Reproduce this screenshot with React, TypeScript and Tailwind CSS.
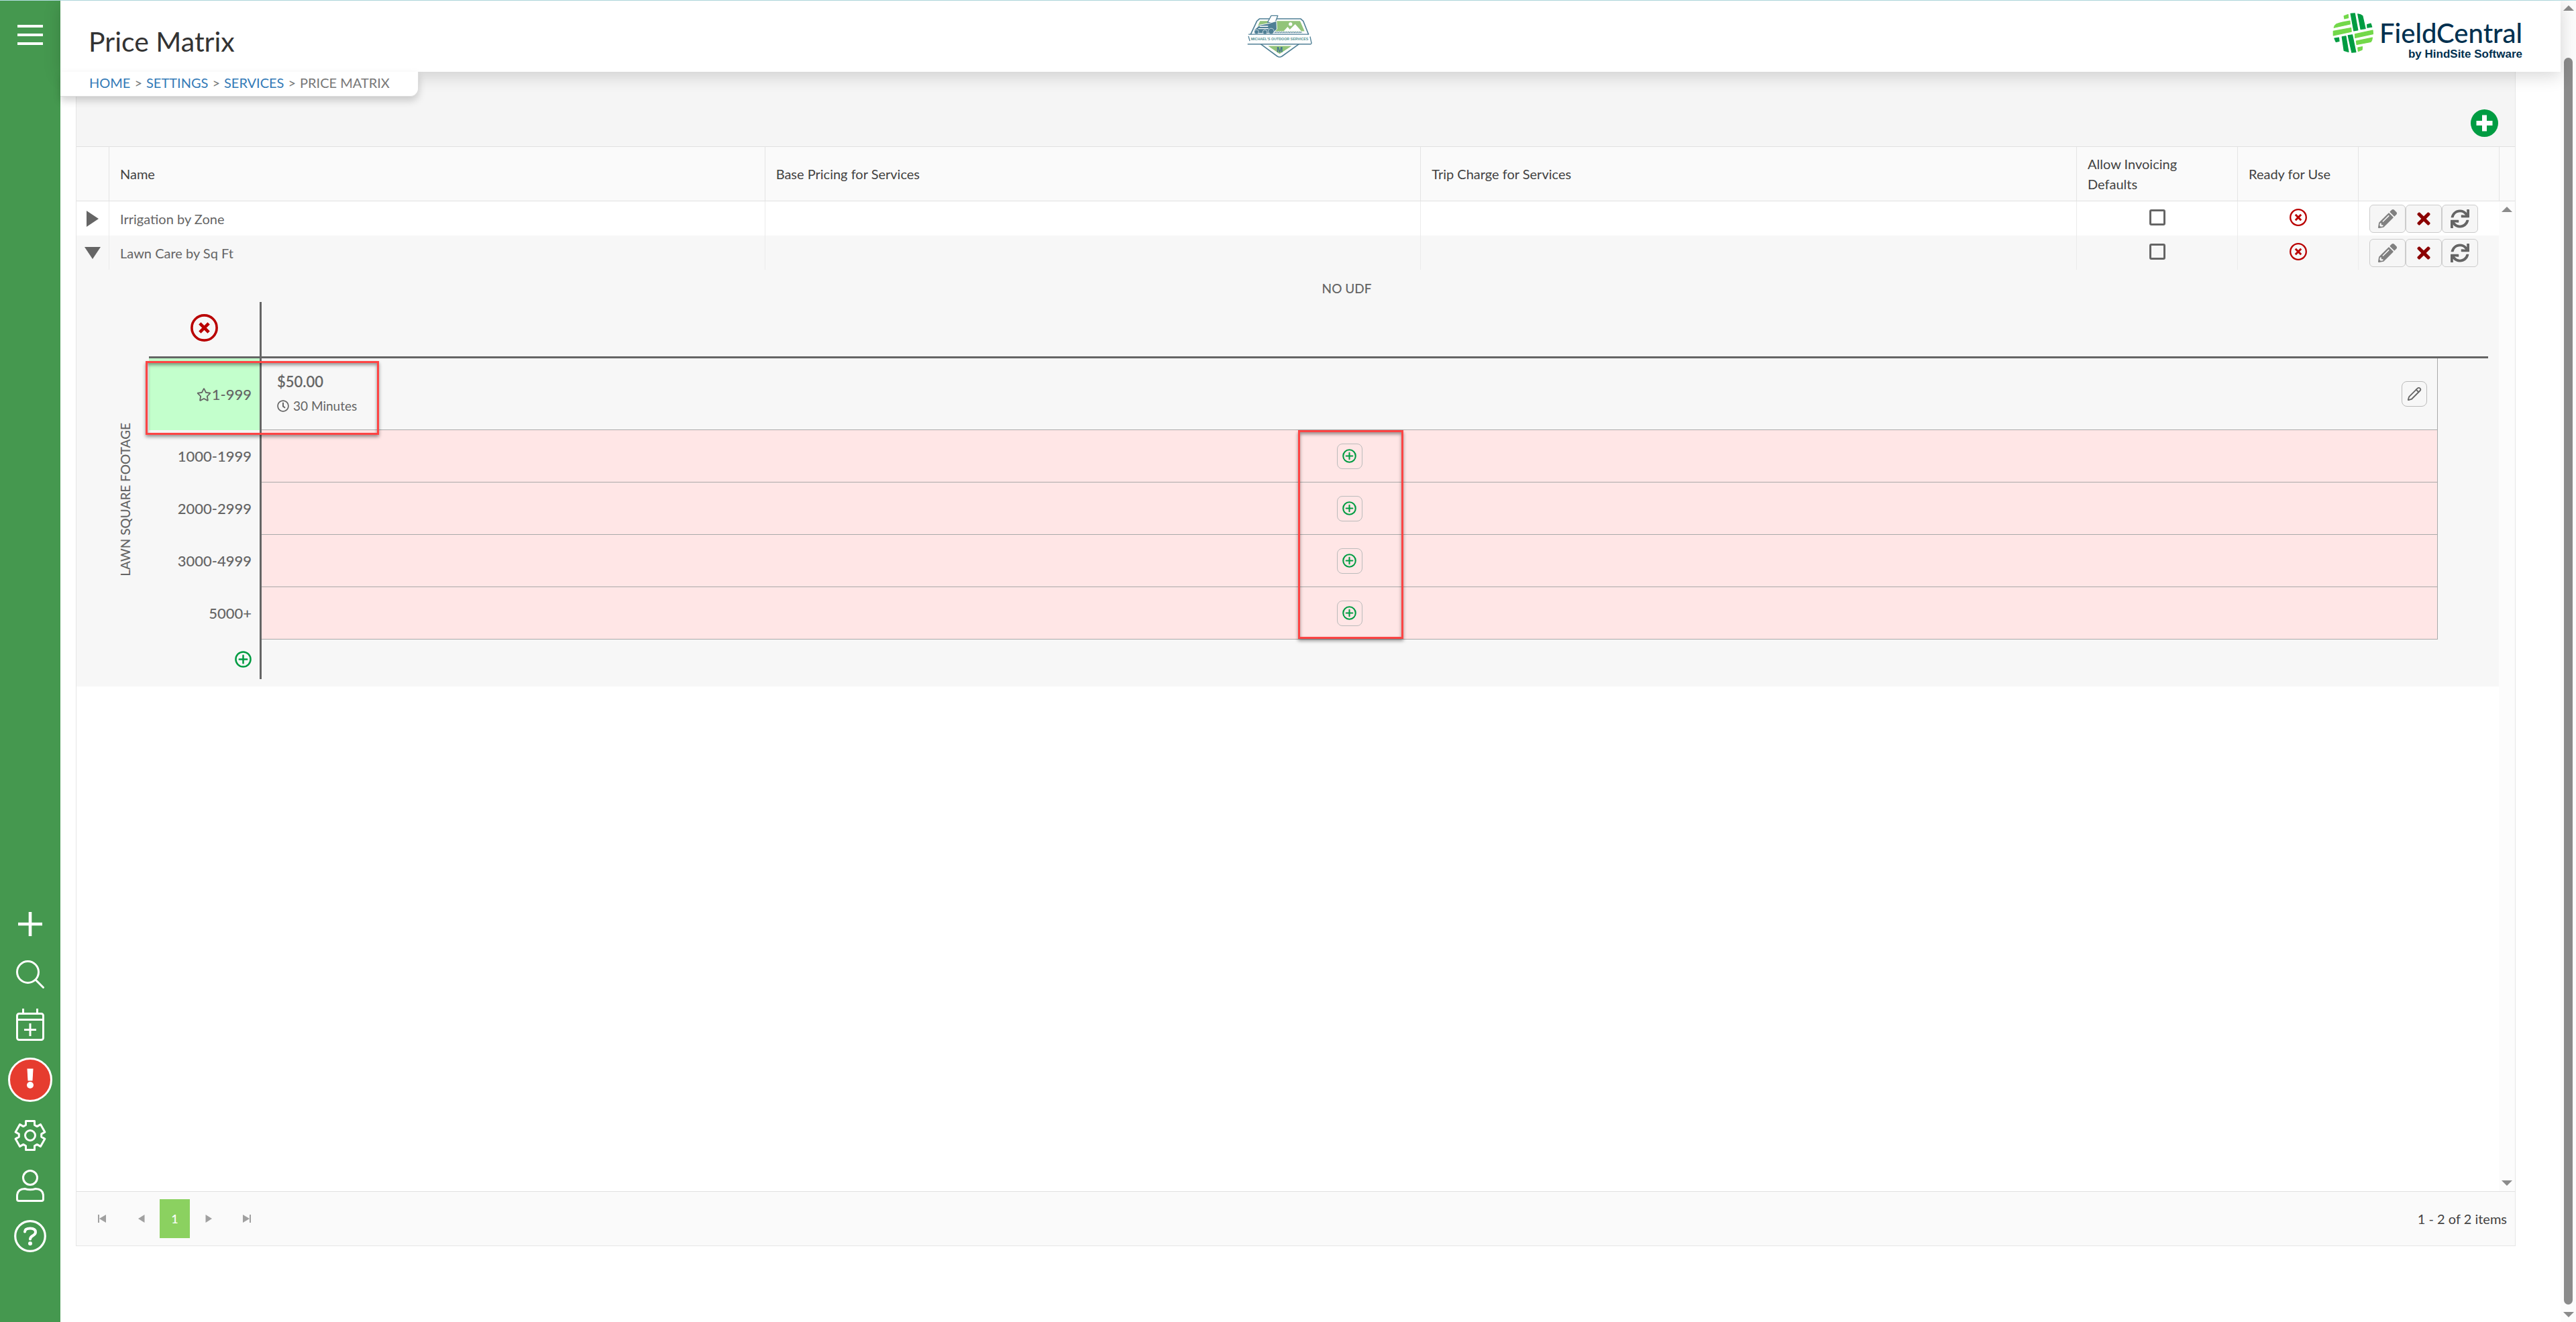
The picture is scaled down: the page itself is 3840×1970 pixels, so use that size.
import { useState, type ReactNode } from "react";
import { FaPencilAlt, FaRegClock, FaRegStar, FaSync, FaTimes } from "react-icons/fa";
import { Pencil } from "lucide-react";

const priceRows = [
  { id: 1, name: "Irrigation by Zone", expanded: false },
  { id: 2, name: "Lawn Care by Sq Ft", expanded: true },
];

const emptyRanges = ["1000-1999", "2000-2999", "3000-4999", "5000+"];

function CirclePlus({ className }: { className: string }) {
  return (
    <svg viewBox="0 0 24 24" className={className} fill="none" stroke="currentColor" strokeWidth="2.4">
      <circle cx="12" cy="12" r="10.6" />
      <path d="M12 6.5v11M6.5 12h11" strokeLinecap="round" />
    </svg>
  );
}

function CircleTimes({ className }: { className: string }) {
  return (
    <svg viewBox="0 0 26 26" className={className} fill="none" stroke="currentColor">
      <circle cx="13" cy="13" r="11.8" strokeWidth="2.3" />
      <path d="M8.8 8.8l8.4 8.4M17.2 8.8l-8.4 8.4" strokeWidth="3" />
    </svg>
  );
}

function CompanyLogo() {
  return (
    <svg viewBox="180 64 292 196" className="h-[65px] w-[97px]" role="img" aria-label="Michael's Outdoor Services">
      <path d="M236 82H420L432 92 456 152 410 198 336 251Q326 257 316 251L244 198 196 152 224 92Z" fill="#fff" stroke="#4f7f95" strokeWidth="5" strokeLinejoin="round" />
      <path d="M238 92H418L438 138H218Z" fill="#93c47a" />
      <path d="M274 204H380L326 240Z" fill="#93c47a" />
      <circle cx="375" cy="106" r="8" fill="#fff" />
      <path d="M344 138L362 118 372 130 396 106 424 138Z" fill="#fff" />
      <path d="M298 146l4-6 4 6 4-6 4 6 4-6 4 6 4-6 4 6 4-6 4 6 4-6 4 6 4-6 4 6 4-6 4 6 4-6 4 6 4-6 4 6 4-6 4 6 4-6 4 6 4-6 4 6 4-6 4 6 4-6 4 6 4-6 4 6" stroke="#4f7f95" strokeWidth="3" fill="none" />
      <path d="M288 68H318L304 104 272 98Z" fill="#fff" stroke="#4f7f95" strokeWidth="4" strokeLinejoin="round" />
      <path d="M212 132L236 110 280 102 312 92 314 128 296 148H212Z" fill="#4f7f95" stroke="#fff" strokeWidth="3" />
      <path d="M236 116h38M230 126h46" stroke="#fff" strokeWidth="4" />
      <circle cx="222" cy="141" r="10" fill="#4f7f95" stroke="#fff" strokeWidth="2" />
      <circle cx="260" cy="142" r="10" fill="#4f7f95" stroke="#fff" strokeWidth="2" />
      <circle cx="288" cy="138" r="13" fill="#4f7f95" stroke="#fff" strokeWidth="2" />
      <path d="M188 152H462L469 192Q468 196 464 196H184L188 180Z" fill="#fff" />
      <path d="M186 152H458M186 160L192 182M182 196H466Q470 194 469 190L463 162" fill="none" stroke="#4f7f95" strokeWidth="4" />
      <text x="326" y="179" textAnchor="middle" fontSize="16" className="fill-[#4f8f90] font-['Liberation_Sans',sans-serif] font-bold">
        MICHAEL'S OUTDOOR SERVICES
      </text>
      <text x="326" y="234" textAnchor="middle" fontSize="33" className="fill-[#3f6f8f] font-['Liberation_Sans',sans-serif] font-bold">
        M
      </text>
    </svg>
  );
}

function FieldCentralLogo() {
  return (
    <div className="flex text-[#00304f]">
      <svg viewBox="247 52 187 187" className="h-[62px] w-[62px]" strokeWidth="4" strokeLinejoin="round">
        <g fill="#73d84a" stroke="#73d84a">
          <path d="M299 70L317 63 318 78 301 82Z" />
          <path d="M265 106Q290 97 325 92L326 106 254 122Q256 112 265 106Z" />
          <path d="M251 138L330 123 332 140 251 157Z" />
          <path d="M348 151L428 134 429 150 349 168Z" />
          <path d="M354 182L426 167Q425 180 419 186L356 198Z" />
          <path d="M361 212L381 208 380 221 363 228Z" />
        </g>
        <g fill="#009c42" stroke="#009c42">
          <path d="M329 59L347 58 361 133 343 136Z" />
          <path d="M361 61Q374 62 382 69L395 126 374 129Z" />
          <path d="M403 108L419 104 424 119 404 122Z" />
          <path d="M256 170L275 167 277 183 263 186Z" />
          <path d="M290 163L307 160 319 231 299 225Z" />
          <path d="M317 157L336 154 352 232 334 233Z" />
        </g>
      </svg>
      <div className="ml-2 flex flex-col items-end pt-2">
        <span className="text-[40px] leading-[46px] font-medium">FieldCentral</span>
        <span className="font-['Liberation_Sans',sans-serif] text-[17px] leading-[18px] font-bold">by HindSite Software</span>
      </div>
    </div>
  );
}

function SideButton({ label, tall, children }: { label: string; tall?: boolean; children: ReactNode }) {
  return (
    <button type="button" aria-label={label} className={`flex w-full items-center justify-center text-white ${tall ? "h-[90px]" : "h-[75px]"}`}>
      {children}
    </button>
  );
}

function Sidebar() {
  return (
    <nav className="flex w-[90px] shrink-0 flex-col bg-[#45984f] pb-[91px]">
      <button type="button" aria-label="Menu" className="mt-9 flex flex-col gap-[9px] self-center">
        <span className="h-1 w-[38px] bg-white" />
        <span className="h-1 w-[38px] bg-white" />
        <span className="h-1 w-[38px] bg-white" />
      </button>
      <div className="mt-auto">
        <SideButton label="Add">
          <svg viewBox="0 0 36 36" className="size-9" stroke="currentColor" strokeWidth="4.6">
            <path d="M18 0v36M0 18h36" />
          </svg>
        </SideButton>
        <SideButton label="Search">
          <svg viewBox="0 0 42 42" className="size-[42px]" fill="none" stroke="currentColor" strokeWidth="3" strokeLinecap="round">
            <circle cx="17.5" cy="17.5" r="16" />
            <path d="M29 29l11.5 11.5" />
          </svg>
        </SideButton>
        <SideButton label="Schedule">
          <svg viewBox="0 0 42 48" className="h-12 w-[42px]" fill="none" stroke="currentColor" strokeWidth="3">
            <rect x="1.5" y="7.5" width="39" height="39" rx="3" />
            <path d="M1.5 16.5h39M10.5 0v7M31.5 0v7M21 22v19M12 31.5h18" />
          </svg>
        </SideButton>
        <SideButton label="Alerts" tall>
          <svg viewBox="0 0 66 66" className="size-[66px]">
            <circle cx="33" cy="33" r="31.5" fill="#e63c2f" stroke="#fff" strokeWidth="3" />
            <path d="M28.5 16.5h9l-1 18h-7z" fill="#fff" />
            <circle cx="33" cy="41" r="5" fill="#fff" />
          </svg>
        </SideButton>
        <SideButton label="Settings">
          <svg viewBox="-24 -24 48 48" className="size-12" fill="none" stroke="currentColor" strokeWidth="3" strokeLinejoin="round">
            <path d="M-6.5-21.5H6.5V-15.5L10.2-13.4 15.4-16.4 21.9-5.1 16.7-2.1V2.1L21.9 5.1 15.4 16.4 10.2 13.4 6.5 15.5V21.5H-6.5V15.5L-10.2 13.4-15.4 16.4-21.9 5.1-16.7 2.1V-2.1L-21.9-5.1-15.4-16.4-10.2-13.4-6.5-15.5Z" />
            <circle r="7.5" />
          </svg>
        </SideButton>
        <SideButton label="Account">
          <svg viewBox="0 0 42 48" className="h-12 w-[42px]" fill="none" stroke="currentColor" strokeWidth="3" strokeLinejoin="round">
            <circle cx="21" cy="12" r="10.5" />
            <path d="M1.5 44V39Q2 28.5 13 28.5Q21 31 29 28.5Q40 28.5 40.5 39V44Q40.5 46.5 38 46.5H4Q1.5 46.5 1.5 44Z" />
          </svg>
        </SideButton>
        <SideButton label="Help">
          <svg viewBox="0 0 48 48" className="size-12" fill="none" stroke="currentColor">
            <circle cx="24" cy="24" r="22.3" strokeWidth="3.2" />
            <path d="M16 17.5Q16 12.5 24 12.5Q32 12.5 32 18Q32 21 28.5 23Q24 25.5 24 28.5" strokeWidth="4" strokeLinecap="round" />
            <circle cx="24" cy="35" r="3" fill="currentColor" stroke="none" />
          </svg>
        </SideButton>
      </div>
    </nav>
  );
}

function ArrowUp() {
  return (
    <svg viewBox="0 0 16 8" className="h-2 w-4" fill="#8b8b8b">
      <path d="M8 0l8 8H0z" />
    </svg>
  );
}

function ArrowDown() {
  return (
    <svg viewBox="0 0 16 8" className="h-2 w-4" fill="#8b8b8b">
      <path d="M0 0h16L8 8z" />
    </svg>
  );
}

function PriceMatrixDetail() {
  return (
    <div className="flex pr-4 pb-[11px] text-[#656565]">
      <div className="flex w-[108px] shrink-0 items-center justify-end pt-[74px] pr-5">
        <span className="rotate-180 text-[19px] leading-[30px] font-medium [writing-mode:vertical-rl]">LAWN SQUARE FOOTAGE</span>
      </div>
      <div className="flex-1">
        <div className="flex h-12 items-center justify-center pt-2 pr-[84px] pl-[168px] text-[19px] font-medium">NO UDF</div>
        <div className="relative">
          <table className="w-full table-fixed border-separate border-spacing-0 text-[22px] font-medium">
            <colgroup>
              <col className="w-[168px]" />
              <col />
              <col className="w-[75px]" />
            </colgroup>
            <tbody>
              <tr className="h-[84px]">
                <td className="border-r-[3px] border-b-[3px] border-[#656565] p-0 pb-1">
                  <button type="button" aria-label="Remove" className="flex w-full justify-center text-[#b90000]">
                    <CircleTimes className="size-[41px]" />
                  </button>
                </td>
                <td className="border-b-[3px] border-[#656565]" />
                <td className="border-b-[3px] border-[#656565]" />
              </tr>
              <tr className="h-[107px]">
                <th scope="row" className="border-r-[3px] border-[#656565] bg-[#c3ffcc] p-0 pr-3 font-medium">
                  <span className="flex items-center justify-end gap-px">
                    <FaRegStar className="size-[22px]" />
                    1-999
                  </span>
                </th>
                <td className="border-r border-b border-[#a9a9a9] p-0 pr-[15px] pl-[23px]">
                  <div className="flex items-center justify-between">
                    <div>
                      <div className="leading-9 font-semibold">$50.00</div>
                      <div className="flex items-center gap-[6px] text-[19px] leading-9 font-normal">
                        <FaRegClock className="size-[18px]" />
                        30 Minutes
                      </div>
                    </div>
                    <button type="button" aria-label="Edit price" className="flex size-[38px] items-center justify-center rounded-lg border border-[#bbb]">
                      <Pencil className="size-[22px]" strokeWidth={2} />
                    </button>
                  </div>
                </td>
                <td />
              </tr>
              {emptyRanges.map((range) => (
                <tr key={range} className="h-[78px]">
                  <th scope="row" className="border-r-[3px] border-[#656565] p-0 pr-3 text-right font-medium">
                    {range}
                  </th>
                  <td className="border-r border-b border-[#a9a9a9] bg-[#ffe6e6] p-0">
                    <button type="button" aria-label={`Add price for ${range}`} className="mx-auto flex size-[38px] items-center justify-center rounded-lg border border-[#bbb] text-[#009c42]">
                      <CirclePlus className="size-[21px]" />
                    </button>
                  </td>
                  <td />
                </tr>
              ))}
              <tr className="h-[59px]">
                <td className="border-r-[3px] border-[#656565] p-0 pr-3">
                  <button type="button" aria-label="Add range" className="ml-auto block text-[#009c42]">
                    <CirclePlus className="size-[25px]" />
                  </button>
                </td>
                <td />
                <td />
              </tr>
            </tbody>
          </table>
          {/* Highlight boxes over the matrix */}
          <div className="pointer-events-none absolute top-[88px] -left-[5px] h-[110px] w-[348px] border-[3px] border-[#ff4444] shadow-[0_3px_5px_rgba(0,0,0,0.4),inset_0_3px_5px_rgba(0,0,0,0.4)]" />
          <div className="pointer-events-none absolute top-[191px] right-[73px] left-[168px] flex justify-center">
            <div className="h-[311px] w-[157px] border-[3px] border-[#ff4444] shadow-[0_3px_5px_rgba(0,0,0,0.4),inset_0_3px_5px_rgba(0,0,0,0.4)]" />
          </div>
        </div>
      </div>
    </div>
  );
}

function GridColumns({ withScroll }: { withScroll?: boolean }) {
  return (
    <colgroup>
      <col className="w-12" />
      <col />
      <col />
      <col />
      <col className="w-60" />
      <col className="w-[180px]" />
      <col className="w-[210px]" />
      {withScroll && <col className="w-6" />}
    </colgroup>
  );
}

function PriceGrid() {
  const [page, setPage] = useState(1);
  const th = "border-l border-[#e4e4e4] py-0 px-4 text-left font-normal";
  const td = "border-l border-[#ebebeb] py-0 px-4";
  const iconTd = "border-l border-[#ebebeb] px-4 pt-0 pb-1";
  const rowButton = "flex h-[42px] w-[54px] items-center justify-center rounded-md border border-[#ccc] bg-[#f6f6f6]";

  return (
    <section className="mr-[67px] mb-[113px] ml-[23px] flex flex-1 flex-col border border-t-0 border-[#e6e6e6] text-xl leading-[30px]">
      <div className="flex h-[111px] items-end justify-end bg-[#f5f5f5] pr-[25px] pb-[14px]">
        <button type="button" aria-label="Add price matrix">
          <svg viewBox="0 0 41 41" className="size-[41px]">
            <circle cx="20.5" cy="20.5" r="20.5" fill="#009c42" />
            <path d="M20.5 8.5v24M8.5 20.5h24" stroke="#fff" strokeWidth="7" />
          </svg>
        </button>
      </div>

      <table className="w-full table-fixed border-separate border-spacing-0 border-y border-[#e1e1e1] bg-[#fafafa] text-[#424242]">
        <GridColumns withScroll />
        <thead>
          <tr className="h-20">
            <th />
            <th className={th}>Name</th>
            <th className={th}>Base Pricing for Services</th>
            <th className={th}>Trip Charge for Services</th>
            <th className={th}>
              Allow Invoicing
              <br />
              Defaults
            </th>
            <th className={th}>Ready for Use</th>
            <th className={th} />
            <th className="border-l border-[#e4e4e4]" />
          </tr>
        </thead>
      </table>

      <div className="flex flex-1">
        <div className="flex-1">
          <table className="w-full table-fixed border-separate border-spacing-0 text-[#656565]">
            <GridColumns />
            <tbody>
              {priceRows.map((row) => (
                <tr key={row.id} className="h-[51px] even:bg-[#f7f7f7]">
                  <td className="p-0">
                    <button type="button" aria-label={`Toggle ${row.name}`} className="flex w-full justify-center">
                      <svg viewBox="0 0 24 24" className="size-6" fill="#656565">
                        <path d={row.expanded ? "M0 3h24L12 21z" : "M3 0v24L21 12z"} />
                      </svg>
                    </button>
                  </td>
                  <td className={td}>{row.name}</td>
                  <td className={td} />
                  <td className={td} />
                  <td className={iconTd}>
                    <input type="checkbox" aria-label={`Allow invoicing defaults for ${row.name}`} className="mx-auto block size-6 appearance-none rounded-[3px] border-[3px] border-[#656565]" />
                  </td>
                  <td className={iconTd}>
                    <CircleTimes className="mx-auto size-[26px] text-[#b90000]" />
                  </td>
                  <td className={td}>
                    <div className="flex">
                      <button type="button" aria-label="Edit" className={rowButton}>
                        <FaPencilAlt className="size-7 text-[#808080]" />
                      </button>
                      <button type="button" aria-label="Delete" className={rowButton}>
                        <FaTimes className="size-7 text-[#8b0000]" />
                      </button>
                      <button type="button" aria-label="Refresh" className={rowButton}>
                        <FaSync className="size-7 text-[#656565]" />
                      </button>
                    </div>
                  </td>
                </tr>
              ))}
              <tr className="bg-[#f7f7f7]">
                <td colSpan={7} className="p-0">
                  <PriceMatrixDetail />
                </td>
              </tr>
            </tbody>
          </table>
        </div>
        <div className="flex w-6 flex-col items-center justify-between bg-[#fcfcfc] py-2">
          <ArrowUp />
          <ArrowDown />
        </div>
      </div>

      <div className="flex h-[81px] items-center border-t border-[#e1e1e1] bg-[#fafafa] pr-3 text-[#424242]">
        <div className="ml-4 flex items-center text-[#a0a0a0]">
          <button type="button" aria-label="First page" className="flex w-[43px] justify-center">
            <svg viewBox="0 0 12 12" className="size-3" fill="currentColor">
              <path d="M0 0h2v12H0zM12 0v12L2 6z" />
            </svg>
          </button>
          <button type="button" aria-label="Previous page" className="ml-[15px] flex w-[45px] justify-center">
            <svg viewBox="0 0 12 12" className="size-3" fill="currentColor">
              <path d="M10.5 0v12L1 6z" />
            </svg>
          </button>
          <button type="button" onClick={() => setPage(1)} className="ml-[5px] h-[58px] w-[45px] bg-[#8bd160] text-lg font-medium text-white">
            {page}
          </button>
          <button type="button" aria-label="Next page" className="ml-[5px] flex w-[45px] justify-center">
            <svg viewBox="0 0 12 12" className="size-3" fill="currentColor">
              <path d="M1.5 0v12L11 6z" />
            </svg>
          </button>
          <button type="button" aria-label="Last page" className="ml-[13px] flex w-[43px] justify-center">
            <svg viewBox="0 0 12 12" className="size-3" fill="currentColor">
              <path d="M10 0h2v12h-2zM0 0v12L10 6z" />
            </svg>
          </button>
        </div>
        <span className="ml-auto">1 - 2 of 2 items</span>
      </div>
    </section>
  );
}

export default function App() {
  return (
    <div className="flex min-h-screen border-t border-[#b5dfe4] bg-white font-[Lato,'Open_Sans',sans-serif]">
      <Sidebar />

      <main className="flex min-w-0 flex-1 flex-col">
        <header className="relative z-10 grid h-[106px] grid-cols-3 items-center bg-white pr-[57px] pl-[42px] shadow-[0_6px_24px_rgba(0,0,0,0.16)]">
          <h1 className="pt-4 text-[41px]/[60px] text-[#333]">Price Matrix</h1>
          <div className="flex justify-center pr-[76px]">
            <CompanyLogo />
          </div>
          <div className="flex justify-end">
            <FieldCentralLogo />
          </div>

          <nav
            aria-label="Breadcrumb"
            className="absolute top-full left-0 flex h-[37px] items-center gap-[6px] rounded-br-xl border-r border-b border-[#ddd] bg-white pr-[42px] pb-1 pl-[43px] text-xl text-[#777] shadow-[0_6px_12px_rgba(0,0,0,0.18)]"
          >
            <a href="#home" className="text-[#337ab7]">HOME</a>
            <span>&gt;</span>
            <a href="#settings" className="text-[#337ab7]">SETTINGS</a>
            <span>&gt;</span>
            <a href="#services" className="text-[#337ab7]">SERVICES</a>
            <span>&gt;</span>
            <span>PRICE MATRIX</span>
          </nav>
        </header>

        <PriceGrid />
      </main>

      {/* Page scroll track */}
      <div className="flex w-[23px] shrink-0 flex-col items-center bg-[#fcfcfc] py-[7px]">
        <ArrowUp />
        <div className="mt-[70px] mb-[11px] w-[13px] flex-1 rounded-full bg-[#8b8b8b]" />
        <ArrowDown />
      </div>
    </div>
  );
}
